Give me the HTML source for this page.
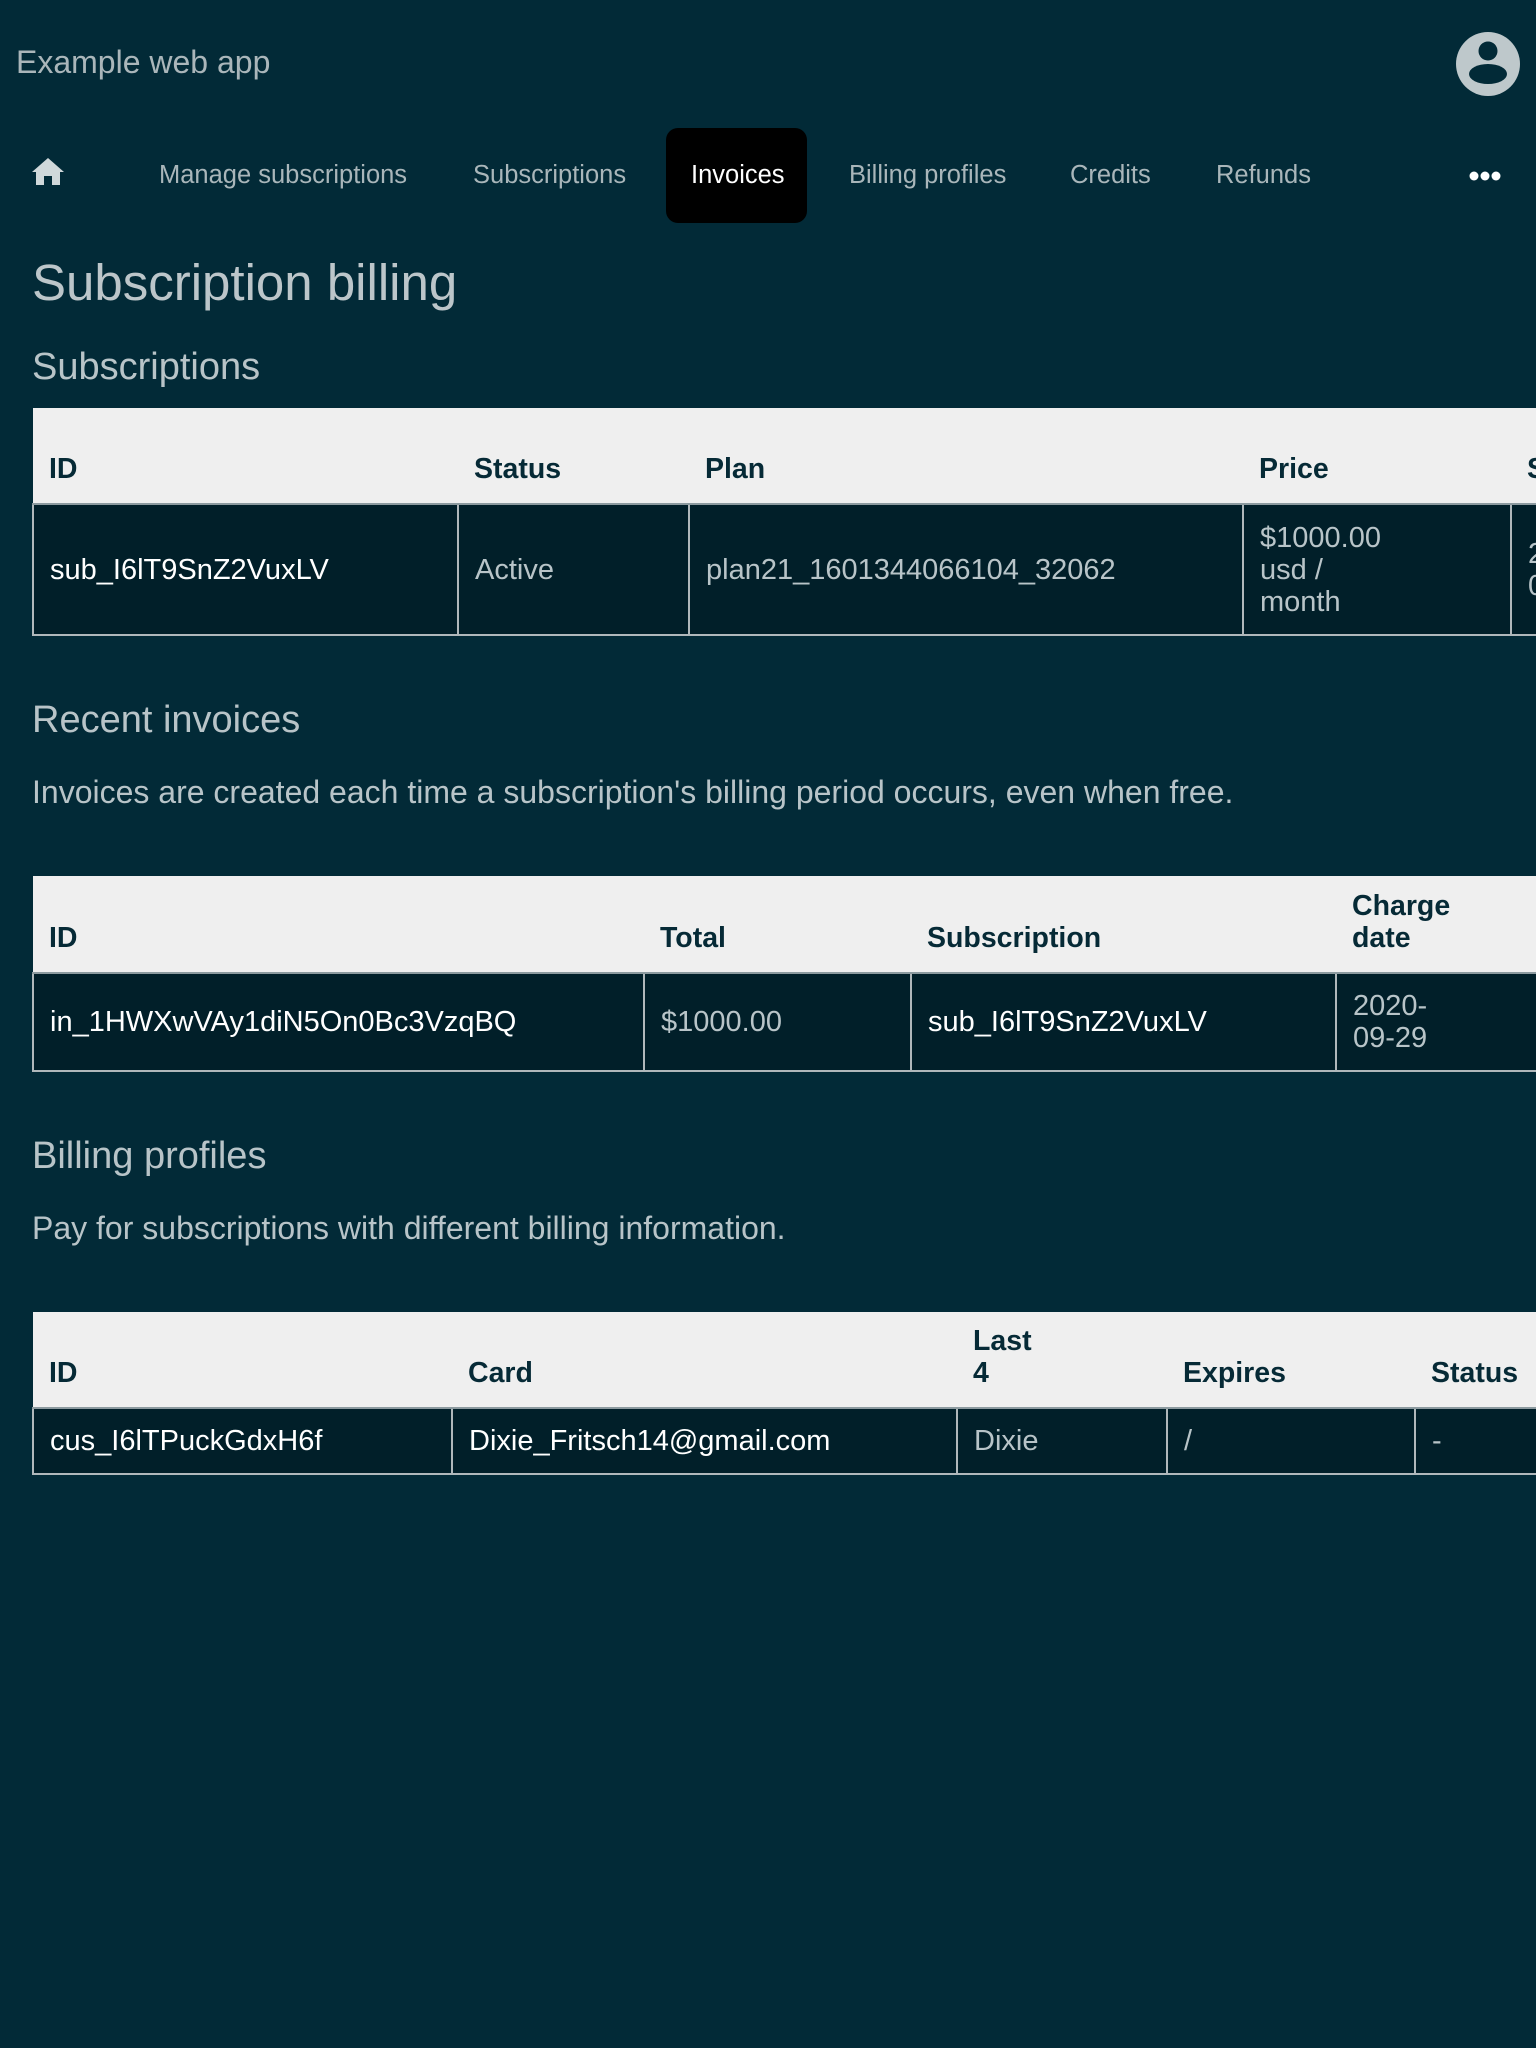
<!DOCTYPE html>
<html><head><meta charset="utf-8"><style>
html,body{margin:0;padding:0;width:1536px;height:2048px;overflow:hidden;background:#022a37;font-family:"Liberation Sans",sans-serif;color:#b8c4c8}
.a{position:absolute;white-space:nowrap}
.nav{font-size:25.5px;top:161px;color:#a9b6ba}
table{position:absolute;left:32px;border-collapse:collapse;table-layout:fixed;font-size:29px;line-height:32px}
th{background:#efefef;color:#062a36;font-weight:bold;text-align:left;vertical-align:bottom;padding:0 16px 18px;border-bottom:2px solid #8c9a9f;white-space:normal;font-size:28.5px}
td{background:#011f29;border-left:2px solid #b0b8bb;border-bottom:2px solid #b0b8bb;padding:0 16px;color:#b8c4c8}
td.w{color:#fff}
</style></head><body>
<div class="a" style="left:16px;top:44px;font-size:32px;color:#aab6ba">Example web app</div>
<svg class="a" style="left:1456px;top:32px" width="64" height="64" viewBox="0 0 64 64"><circle cx="32" cy="32" r="32" fill="#bec8cb"/><circle cx="32" cy="19" r="9.5" fill="#022a37"/><ellipse cx="32" cy="42" rx="19" ry="10" fill="#022a37"/></svg>
<svg class="a" style="left:32px;top:158px" width="32" height="28" viewBox="0 0 32 28"><path d="M16 0 L32 14 L28 14 L28 27 L20 27 L20 18 L12 18 L12 27 L4 27 L4 14 L0 14 Z" fill="#d0d8da"/></svg>
<div class="a nav" style="left:159px">Manage subscriptions</div>
<div class="a nav" style="left:473px">Subscriptions</div>
<div class="a" style="left:666px;top:128px;width:141px;height:95px;background:#000;border-radius:12px"></div>
<div class="a nav" style="left:691px;color:#fff">Invoices</div>
<div class="a nav" style="left:849px">Billing profiles</div>
<div class="a nav" style="left:1070px">Credits</div>
<div class="a nav" style="left:1216px">Refunds</div>
<svg class="a" style="left:1468px;top:170px" width="34" height="12"><circle cx="6" cy="6" r="4.5" fill="#fff"/><circle cx="17" cy="6" r="4.5" fill="#fff"/><circle cx="28" cy="6" r="4.5" fill="#fff"/></svg>
<div class="a" style="left:32px;top:253px;font-size:51px;color:#bcc6ca">Subscription billing</div>
<div class="a" style="left:32px;top:346px;font-size:38px">Subscriptions</div>
<table style="top:408px;width:1700px">
<colgroup><col style="width:425px"><col style="width:231px"><col style="width:554px"><col style="width:268px"><col style="width:222px"></colgroup>
<tr style="height:96px"><th>ID</th><th>Status</th><th>Plan</th><th>Price</th><th>Start</th></tr>
<tr style="height:131px"><td class="w">sub_I6lT9SnZ2VuxLV</td><td>Active</td><td>plan21_1601344066104_32062</td><td>$1000.00<br>usd /<br>month</td><td>2020-<br>09-29</td></tr>
</table>
<div class="a" style="left:32px;top:699px;font-size:38px">Recent invoices</div>
<div class="a" style="left:32px;top:774px;font-size:32px">Invoices are created each time a subscription's billing period occurs, even when free.</div>
<table style="top:876px;width:1700px">
<colgroup><col style="width:611px"><col style="width:267px"><col style="width:425px"><col style="width:397px"></colgroup>
<tr style="height:97px"><th>ID</th><th>Total</th><th>Subscription</th><th>Charge<br>date</th></tr>
<tr style="height:98px"><td class="w">in_1HWXwVAy1diN5On0Bc3VzqBQ</td><td>$1000.00</td><td class="w">sub_I6lT9SnZ2VuxLV</td><td>2020-<br>09-29</td></tr>
</table>
<div class="a" style="left:32px;top:1135px;font-size:38px">Billing profiles</div>
<div class="a" style="left:32px;top:1210px;font-size:32px">Pay for subscriptions with different billing information.</div>
<table style="top:1312px;width:1700px">
<colgroup><col style="width:419px"><col style="width:505px"><col style="width:210px"><col style="width:248px"><col style="width:318px"></colgroup>
<tr style="height:96px"><th>ID</th><th>Card</th><th>Last<br>4</th><th>Expires</th><th>Status</th></tr>
<tr style="height:66px"><td class="w">cus_I6lTPuckGdxH6f</td><td class="w">Dixie_Fritsch14@gmail.com</td><td>Dixie</td><td>/</td><td>-</td></tr>
</table>
</body></html>
